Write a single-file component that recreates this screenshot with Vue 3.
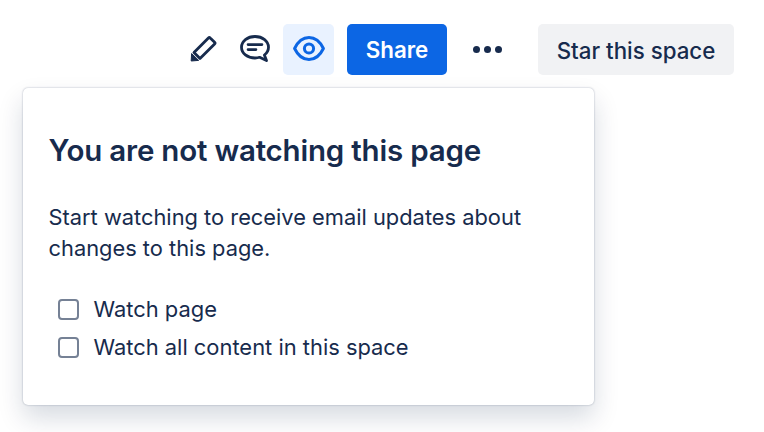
<template>
  <div class="page">
    <div class="toolbar">
      <button class="icon-btn edit" aria-label="Edit">
        <svg width="27" height="27" viewBox="0 0 27 27" fill="none">
          <path d="M4 17.6 L18.4 3 Q19.3 2.1 20.2 3 L24.6 7.2 Q25.5 8.1 24.6 9 L10 23.4 Z" stroke="#172b4d" stroke-width="2.8" stroke-linejoin="round" />
          <path d="M1.2 26 L1.6 18.6 L8.6 25.4 Z" fill="#172b4d" stroke="#172b4d" stroke-width="1" stroke-linejoin="round" />
        </svg>
      </button>
      <button class="icon-btn comment" aria-label="Comment">
        <svg width="30" height="27" viewBox="0 0 30 27" fill="none">
          <path d="M15 1.5 C7.4 1.5 1.5 6.2 1.5 12.3 C1.5 18.4 7.4 23 15 23 C16.6 23 18.2 22.8 19.6 22.3 L26.5 25.6 L24.4 20 C27 18 28.5 15.4 28.5 12.3 C28.5 6.2 22.6 1.5 15 1.5 Z" stroke="#172b4d" stroke-width="2.8" stroke-linejoin="round" />
          <path d="M8 9.6 H22 M8 14.6 H16" stroke="#172b4d" stroke-width="2.6" stroke-linecap="round" />
        </svg>
      </button>
      <button class="icon-btn watch" aria-label="Watch">
        <svg width="32" height="25" viewBox="0 0 32 25" fill="none">
          <path d="M1.6 12.5 C5 5.4 9.9 1.5 16 1.5 C22.1 1.5 27 5.4 30.4 12.5 C27 19.6 22.1 23.5 16 23.5 C9.9 23.5 5 19.6 1.6 12.5 Z" stroke="#0c66e4" stroke-width="3" stroke-linejoin="round" />
          <circle cx="16" cy="12.5" r="4.6" stroke="#0c66e4" stroke-width="3" />
        </svg>
      </button>
      <button class="share">Share</button>
      <button class="more" aria-label="More">
        <span class="dot"></span><span class="dot"></span><span class="dot"></span>
      </button>
      <button class="star">Star this space</button>
    </div>

    <div class="popup">
      <h2>You are not watching this page</h2>
      <p>Start watching to receive email updates about changes to this page.</p>
      <label v-for="opt in options" :key="opt" class="option">
        <span class="box"></span>
        {{ opt }}
      </label>
    </div>
  </div>
</template>

<script setup>
const options = ["Watch page", "Watch all content in this space"]
</script>

<style>
body {
  background: #fff;
  overflow: hidden;
}
</style>

<style scoped>
.page {
  position: relative;
  width: 764px;
  height: 432px;
  overflow: hidden;
  font-family: Inter, "Liberation Sans", sans-serif;
  color: #172b4d;
}

.toolbar {
  display: flex;
  justify-content: flex-end;
  align-items: center;
  padding: 24px 30px 0 0;
}

button {
  border: 0;
  padding: 0;
  background: none;
  font-family: inherit;
  display: flex;
  align-items: center;
  justify-content: center;
}

.icon-btn {
  width: 51px;
  height: 51px;
  border-radius: 5px;
}

.icon-btn svg {
  margin-bottom: 2px;
}

.comment {
  margin-right: 3px;
}

.watch {
  background: #e9f2ff;
  margin-right: 13px;
}

.share {
  width: 100px;
  height: 51px;
  border-radius: 5px;
  background: #0c66e4;
  color: #fff;
  font-size: 22.3px;
  font-weight: 600;
}

.more {
  width: 51px;
  height: 51px;
  margin: 0 25px 0 15px;
  gap: 4px;
}

.dot {
  width: 7px;
  height: 7px;
  border-radius: 50%;
  background: #172b4d;
}

.star {
  width: 196px;
  height: 51px;
  border-radius: 5px;
  background: #f1f2f4;
  color: #172b4d;
  font-size: 22.3px;
  font-weight: 500;
  padding-top: 1px;
}

.popup {
  position: absolute;
  left: 23px;
  top: 88px;
  width: 571px;
  height: 317px;
  box-sizing: border-box;
  padding: 40px 25.5px 0;
  border-radius: 5px;
  background: #fff;
  box-shadow: 0 13px 26px rgba(9, 30, 66, 0.16), 0 0 2px rgba(9, 30, 66, 0.35);
}

h2 {
  margin: 0 0 30px;
  font-size: 29.5px;
  line-height: 44px;
  font-weight: 600;
  letter-spacing: -0.2px;
}

p {
  margin: 0 0 26px;
  font-size: 21.85px;
  line-height: 31px;
}

.option {
  display: flex;
  align-items: center;
  gap: 14.5px;
  height: 38px;
  padding-left: 9.5px;
  font-size: 21.9px;
}

.box {
  width: 21px;
  height: 21px;
  box-sizing: border-box;
  border: 2px solid #758195;
  border-radius: 4px;
}
</style>
